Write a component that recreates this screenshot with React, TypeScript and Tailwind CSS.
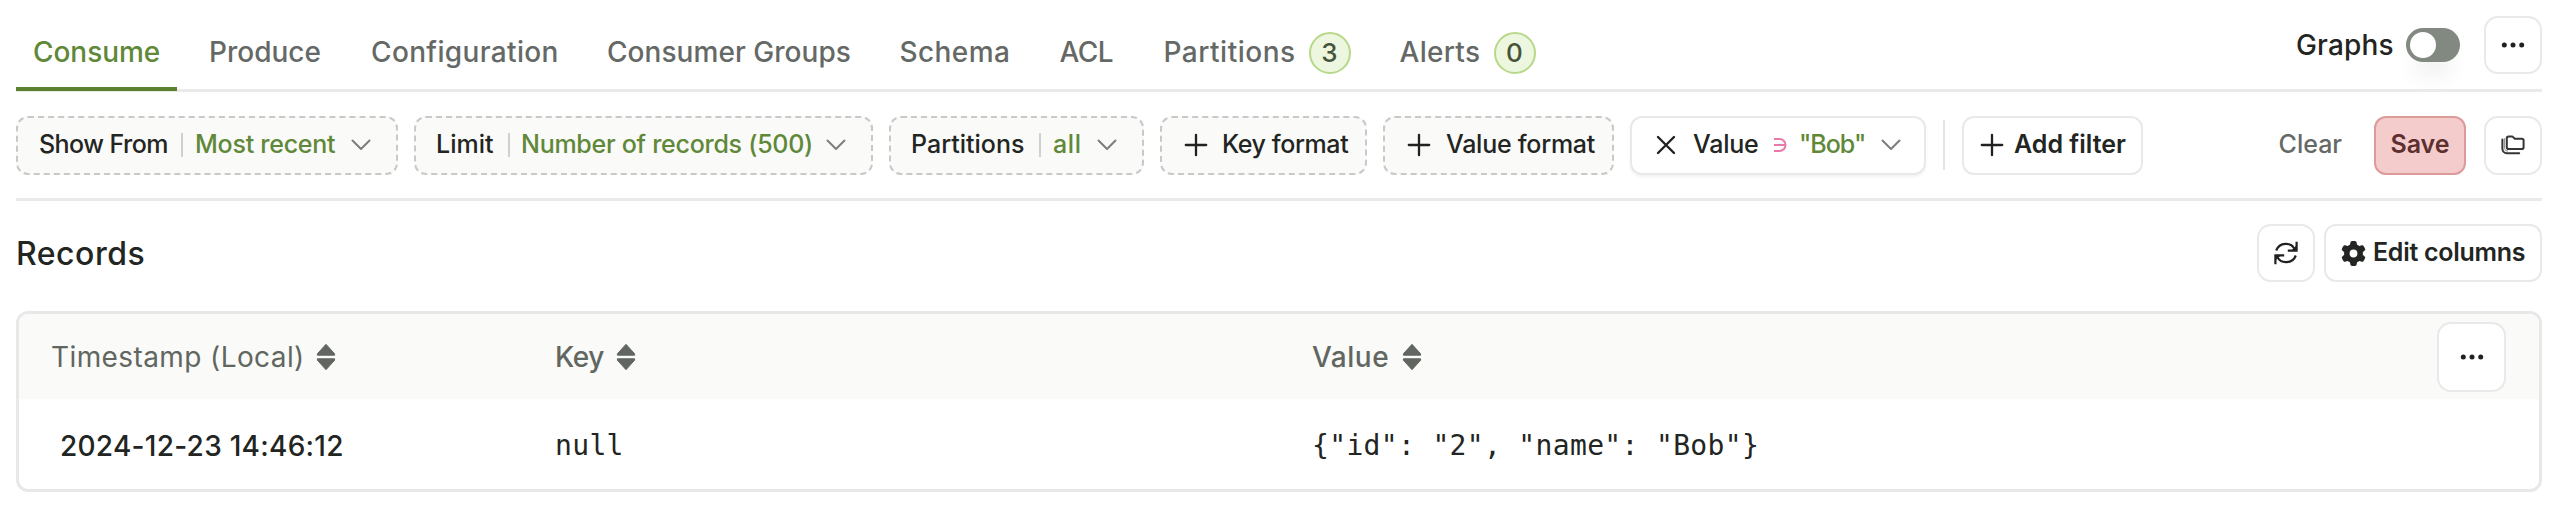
import type { ReactNode } from "react"
import { FaGear } from "react-icons/fa6"

function Chevron() {
  return (
    <svg className="h-3 w-5 shrink-0" viewBox="0 0 20 12" fill="none" stroke="#7b7f7b" strokeWidth="2" strokeLinecap="round" strokeLinejoin="round">
      <path d="M1.5 1.5 10 10 18.5 1.5" />
    </svg>
  )
}

function Plus({ className }: { className: string }) {
  return (
    <svg className={`h-6 w-6 shrink-0 ${className}`} viewBox="0 0 24 24" fill="none" stroke="#1f221f" strokeWidth="2.3" strokeLinecap="round">
      <path d="M12 1.8v20.4M1.8 12h20.4" />
    </svg>
  )
}

function Dots() {
  return (
    <svg className="h-2 w-6" viewBox="0 0 24 8" fill="#1f221f">
      <circle cx="3.3" cy="4" r="2.5" />
      <circle cx="12" cy="4" r="2.5" />
      <circle cx="20.7" cy="4" r="2.5" />
    </svg>
  )
}

function Sort() {
  return (
    <svg className="h-[28px] w-5 shrink-0" viewBox="0 0 20 28" fill="#616661" stroke="#616661" strokeWidth="1" strokeLinejoin="round">
      <path d="M10 1.3 18.6 10.8v1.4H1.4v-1.4zM10 26.7 18.6 17.2v-1.4H1.4v1.4z" />
    </svg>
  )
}

function Divider({ className }: { className: string }) {
  return <div className={`h-6 w-0.5 shrink-0 bg-[#d0d0cf] ${className}`} />
}

function Chip({ className, children }: { className: string; children: ReactNode }) {
  return (
    <button className={`flex h-[59px] shrink-0 items-center rounded-xl border-2 border-dashed border-[#c9c9c8] bg-[#fafaf9] ${className}`}>
      {children}
    </button>
  )
}

function Outline({ className, children }: { className: string; children: ReactNode }) {
  return (
    <button className={`flex shrink-0 items-center border-2 border-[#e8e9e8] bg-white ${className}`}>
      {children}
    </button>
  )
}

function Count({ value }: { value: number }) {
  return (
    <span className="flex h-[42px] w-[42px] items-center justify-center rounded-full border-2 border-[#b7d889] bg-[#edf6df] text-[26px] tracking-normal text-[#46543a]">
      {value}
    </span>
  )
}

export default function App() {
  return (
    <div className="h-[510px] w-[2558px] overflow-hidden bg-white px-4 font-['Inter',sans-serif] font-medium text-[#222522]">
      <header className="flex h-[92px] w-[2526px] border-b-[3px] border-[#e9eae9]">
        <nav className="flex h-[91px] items-start whitespace-nowrap text-[28px] leading-[105px] text-[#656966]">
          <a className="h-[91px] w-[161px] border-b-4 border-[#5b8030] pl-[17px] tracking-[-0.05px] text-[#5f8838]">Consume</a>
          <a className="ml-[32px] w-[162px]">Produce</a>
          <a className="w-[236px] tracking-[0.35px]">Configuration</a>
          <a className="w-[292.5px] tracking-[0.05px]">Consumer Groups</a>
          <a className="w-[160px] tracking-[0.4px]">Schema</a>
          <a className="w-[104px] tracking-[-0.6px]">ACL</a>
          <a className="flex w-[236px] items-center tracking-[0.5px]"><span className="w-[145px]">Partitions</span><Count value={3} /></a>
          <a className="flex items-center tracking-[0.3px]"><span className="w-[94px]">Alerts</span><Count value={0} /></a>
        </nav>
        <div className="ml-auto flex h-[89px] items-center">
          <span className="w-[110px] text-[28px] leading-[34px] tracking-[0.15px]">Graphs</span>
          <div className="mr-[24px] flex h-[34px] w-[54px] items-center rounded-full bg-[#828981] px-1 shadow-[0_20px_20px_-6px_rgba(0,0,0,0.06)]">
            <div className="h-[26px] w-[26px] rounded-full bg-white" />
          </div>
          <Outline className="h-[58px] w-[58px] justify-center rounded-[14px]"><Dots /></Outline>
        </div>
      </header>

      <section className="flex h-[109px] w-[2526px] items-center whitespace-nowrap border-b-[3px] border-[#e9eae9] text-[25px]">
        <div className="flex items-center gap-4">
          <Chip className="w-[382px] pl-[21px]">
            <span className="w-[142px] text-left tracking-[-0.55px]">Show From</span>
            <Divider className="mr-[12px]" />
            <span className="w-[156px] text-left tracking-[-0.25px] text-[#5f8838]">Most recent</span>
            <Chevron />
          </Chip>
          <Chip className="w-[459px] pl-[20px]">
            <span className="w-[72px] text-left">Limit</span>
            <Divider className="mr-[11px]" />
            <span className="w-[305px] text-left tracking-[-0.27px] text-[#5f8838]">Number of records (500)</span>
            <Chevron />
          </Chip>
          <Chip className="w-[255px] pl-[20px]">
            <span className="w-[128px] text-left">Partitions</span>
            <Divider className="mr-[12px]" />
            <span className="w-[44px] text-left tracking-[0.6px] text-[#5f8838]">all</span>
            <Chevron />
          </Chip>
          <Chip className="w-[207px] pl-[22px]">
            <Plus className="mr-[14px]" />
            <span className="tracking-[-0.4px]">Key format</span>
          </Chip>
          <Chip className="w-[231px] pl-[22px]">
            <Plus className="mr-[15px]" />
            <span className="tracking-[-0.25px]">Value format</span>
          </Chip>
          <Outline className="h-[59px] w-[296px] rounded-xl pl-[24px] shadow-[0_2px_3px_rgba(0,0,0,0.05)]">
            <svg className="mr-[17px] h-5 w-5" viewBox="0 0 20 20" fill="none" stroke="#1f221f" strokeWidth="2.4" strokeLinecap="round">
              <path d="m2 2 16 16M18 2 2 18" />
            </svg>
            <span className="w-[80px] text-left tracking-[-0.2px]">Value</span>
            <svg className="mr-[12px] h-4 w-[14px]" viewBox="0 0 14 16" fill="none" stroke="#ea79aa" strokeWidth="2">
              <path d="M1 2h5.5a6 6 0 0 1 0 12H1M1 8h11.5" />
            </svg>
            <span className="w-[82px] text-left tracking-[-1px] text-[#5f8838]">"Bob"</span>
            <Chevron />
          </Outline>
        </div>
        <div className="ml-[17px] h-[50px] w-0.5 bg-[#e3e4e3]" />
        <Outline className="ml-[17px] h-[59px] w-[181px] rounded-xl pl-[16px] font-semibold">
          <Plus className="mr-[10px]" />
          <span>Add filter</span>
        </Outline>
        <div className="ml-auto flex items-center">
          <span className="mr-[32px] text-[#656966]">Clear</span>
          <button className="mr-[18px] h-[59px] w-[92px] rounded-xl border-2 border-[#dc9a9a] bg-[#f4cccc] font-semibold text-[#5e2f2f]">Save</button>
          <Outline className="h-[59px] w-[58px] justify-center rounded-[14px]">
            <svg className="h-5 w-6" viewBox="0 0 24 20" fill="none" stroke="#333633" strokeWidth="2" strokeLinecap="round" strokeLinejoin="round">
              <path d="M5.8 3.2a1.8 1.8 0 0 1 1.8-1.8h3.7l2.5 2.4h7a1.8 1.8 0 0 1 1.8 1.8v6.6a1.8 1.8 0 0 1-1.8 1.8H7.6a1.8 1.8 0 0 1-1.8-1.8z" />
              <path d="M1.4 4.6v9.2a4.4 4.4 0 0 0 4.4 4.4h12.4" />
              <path d="M3.6 3.6v9.8a3 3 0 0 0 3 2.8" strokeWidth="1" stroke="#8a8c8a" />
            </svg>
          </Outline>
        </div>
      </section>

      <section className="flex h-[110px] w-[2526px] items-center justify-between whitespace-nowrap pb-[6px]">
        <h2 className="pt-[2px] text-[32px] leading-[42px] tracking-[0.5px]">Records</h2>
        <div className="flex items-center gap-[9px]">
          <Outline className="h-[58px] w-[58px] justify-center rounded-[14px]">
            <svg className="h-6 w-6" viewBox="0 0 24 24" fill="none" stroke="#1f221f" strokeWidth="2.2">
              <path d="M2.2 9.5A10.2 10.2 0 0 1 21 8.6M21.8 14.5A10.2 10.2 0 0 1 3 15.4" />
              <path d="M22.6.8v8.8h-8.8M1.4 23.2v-8.8h8.8" />
              <path d="m22 5.5-3.6 3.6H22zM2 18.5l3.6-3.6H2z" fill="#1f221f" strokeWidth="1" />
            </svg>
          </Outline>
          <Outline className="h-[58px] w-[218px] rounded-xl pl-[15px] text-[25px] font-semibold">
            <FaGear className="mr-[7px] h-[25px] w-[25px]" />
            <span className="tracking-[-0.28px]">Edit columns</span>
          </Outline>
        </div>
      </section>

      <section className="h-[181px] w-[2526px] overflow-hidden whitespace-nowrap rounded-xl border-[3px] border-[#e7e9e8] text-[28px]">
        <div className="flex h-[85px] items-center bg-[#fafaf8] pl-8 text-[#616661]">
          <div className="flex w-[504px] items-center"><span className="w-[265px] font-normal tracking-[0.4px]">Timestamp (Local)</span><Sort /></div>
          <div className="flex w-[757px] items-center"><span className="w-[61px] tracking-[-0.4px]">Key</span><Sort /></div>
          <div className="flex items-center"><span className="w-[90px] tracking-[0.5px]">Value</span><Sort /></div>
          <Outline className="ml-auto mr-[33px] h-[70px] w-[69px] justify-center rounded-[14px]"><Dots /></Outline>
        </div>
        <div className="flex h-[90px] items-center pl-[41px] pt-[3px]">
          <div className="w-[495px] tracking-[0.27px]">2024-12-23 14:46:12</div>
          <div className="w-[757px] font-['DejaVu_Sans_Mono',monospace] font-normal tracking-[0.34px]">null</div>
          <div className="font-['DejaVu_Sans_Mono',monospace] font-normal tracking-[0.34px]">{'{"id": "2", "name": "Bob"}'}</div>
        </div>
      </section>
    </div>
  )
}
